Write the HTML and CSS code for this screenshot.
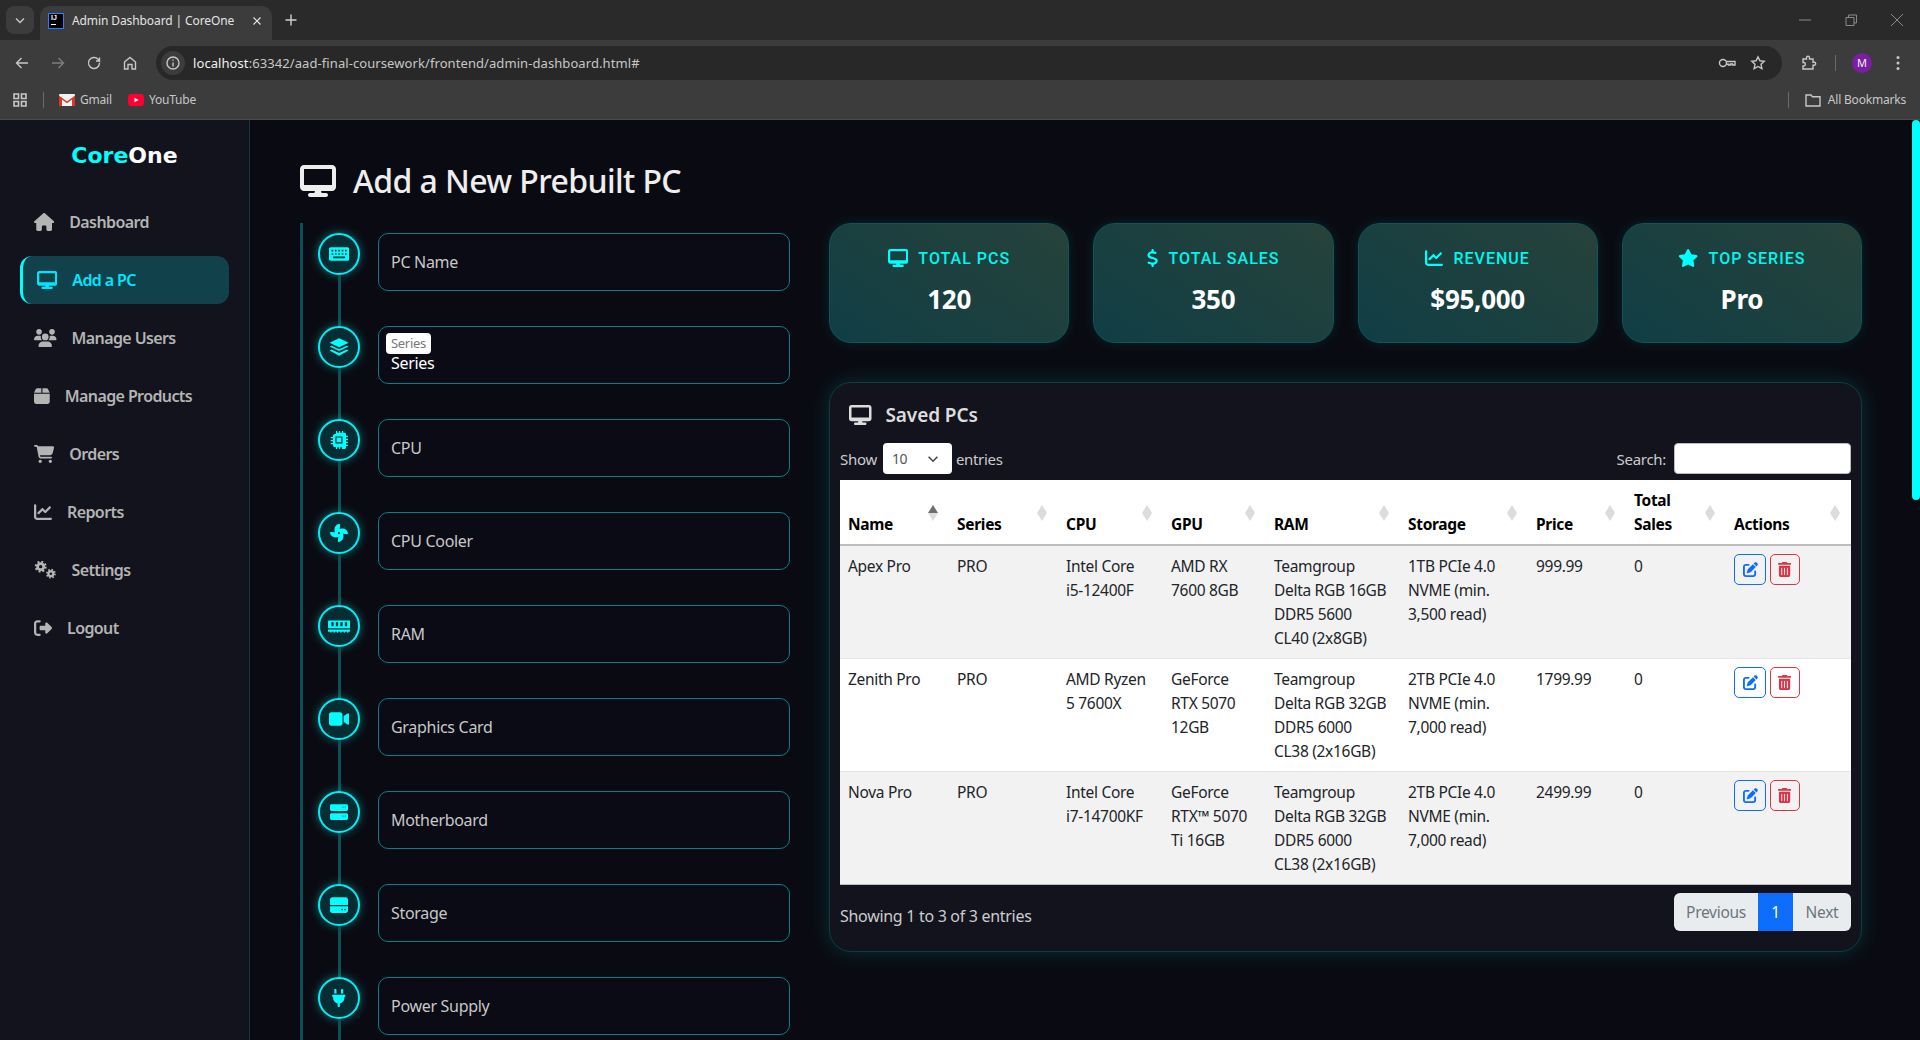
FILE: index.html
```html
<!DOCTYPE html>
<html>
<head>
    <meta charset="UTF-8">
    <title>Admin Dashboard | CoreOne</title>
    <link rel="stylesheet" href="styles.css">
</head>
<body>
<svg class="defs" width="0" height="0">
    <defs>
        <path id="i-desktop" d="M64 0C28.7 0 0 28.7 0 64V352c0 35.3 28.7 64 64 64H240l-10.7 32H160c-17.7 0-32 14.3-32 32s14.3 32 32 32H416c17.7 0 32-14.3 32-32s-14.3-32-32-32H346.7L336 416H512c35.3 0 64-28.7 64-64V64c0-35.3-28.7-64-64-64H64zM512 64V320H64V64H512z"/>
        <path id="i-house" d="M575.8 255.5c0 18-15 32.1-32 32.1h-32l.7 160.2c0 2.7-.2 5.4-.5 8.1V472c0 22.1-17.9 40-40 40H456c-1.1 0-2.2 0-3.3-.1c-1.4 .1-2.8 .1-4.2 .1H416 392c-22.1 0-40-17.9-40-40V448 384c0-17.7-14.3-32-32-32H256c-17.7 0-32 14.3-32 32v64 24c0 22.1-17.9 40-40 40H160 128.1c-1.5 0-3-.1-4.5-.2c-1.2 .1-2.4 .2-3.6 .2H104c-22.1 0-40-17.9-40-40V360c0-.9 0-1.9 .1-2.8V287.6H32c-18 0-32-14-32-32.1c0-9 3-17 10-24L266.4 8c7-7 15-8 22-8s15 2 21 7L564.8 231.5c8 7 12 15 11 24z"/>
        <path id="i-users" d="M144 0a80 80 0 1 1 0 160A80 80 0 1 1 144 0zM512 0a80 80 0 1 1 0 160A80 80 0 1 1 512 0zM0 298.7C0 239.8 47.8 192 106.7 192h42.7c15.9 0 31 3.5 44.6 9.7c-1.3 7.2-1.9 14.7-1.9 22.3c0 38.2 16.8 72.5 43.3 96c-.2 0-.4 0-.7 0H21.3C9.6 320 0 310.4 0 298.7zM405.3 320c-.2 0-.4 0-.7 0c26.6-23.5 43.3-57.8 43.3-96c0-7.6-.7-15-1.9-22.3c13.6-6.3 28.7-9.7 44.6-9.7h42.7C592.2 192 640 239.8 640 298.7c0 11.8-9.6 21.3-21.3 21.3H405.3zM224 224a96 96 0 1 1 192 0 96 96 0 1 1 -192 0zM128 485.3C128 411.7 187.7 352 261.3 352H378.7C452.3 352 512 411.7 512 485.3c0 14.7-11.9 26.7-26.7 26.7H154.7c-14.7 0-26.7-11.9-26.7-26.7z"/>
        <path id="i-box" d="M50.7 58.5L0 160H208V32H93.7C75.5 32 58.9 42.3 50.7 58.5zM240 160H448L397.3 58.5C389.1 42.3 372.5 32 354.3 32H240V160zm208 32H0V416c0 35.3 28.7 64 64 64H384c35.3 0 64-28.7 64-64V192z"/>
        <path id="i-cart" d="M0 24C0 10.7 10.7 0 24 0H69.5c22 0 41.5 12.8 50.6 32h411c26.3 0 45.5 25 38.6 50.4l-41 152.3c-8.5 31.4-37 53.3-69.5 53.3H170.7l5.4 28.5c2.2 11.3 12.1 19.5 23.6 19.5H488c13.3 0 24 10.7 24 24s-10.7 24-24 24H199.7c-34.6 0-64.3-24.6-70.7-58.5L77.4 54.5c-.7-3.8-4-6.5-7.9-6.5H24C10.7 48 0 37.3 0 24zM128 464a48 48 0 1 1 96 0 48 48 0 1 1 -96 0zm336-48a48 48 0 1 1 0 96 48 48 0 1 1 0-96z"/>
        <path id="i-chart" d="M64 64c0-17.7-14.3-32-32-32S0 46.3 0 64V400c0 44.2 35.8 80 80 80H480c17.7 0 32-14.3 32-32s-14.3-32-32-32H80c-8.8 0-16-7.2-16-16V64zm406.6 86.6c12.5-12.5 12.5-32.8 0-45.3s-32.8-12.5-45.3 0L320 210.7l-57.4-57.4c-12.5-12.5-32.8-12.5-45.3 0l-112 112c-12.5 12.5-12.5 32.8 0 45.3s32.8 12.5 45.3 0L240 221.3l57.4 57.4c12.5 12.5 32.8 12.5 45.3 0l128-128z"/>
        <path id="i-logout" d="M377.9 105.9L500.7 228.7c7.2 7.2 11.3 17.1 11.3 27.3s-4.1 20.1-11.3 27.3L377.9 406.1c-6.4 6.4-15 9.9-24 9.9c-18.7 0-33.9-15.2-33.9-33.9l0-62.1-128 0c-17.7 0-32-14.3-32-32l0-64c0-17.7 14.3-32 32-32l128 0 0-62.1c0-18.7 15.2-33.9 33.9-33.9c9 0 17.6 3.6 24 9.9zM160 96L96 96c-17.7 0-32 14.3-32 32l0 256c0 17.7 14.3 32 32 32l64 0c17.7 0 32 14.3 32 32s-14.3 32-32 32l-64 0c-53 0-96-43-96-96L0 128C0 75 43 32 96 32l64 0c17.7 0 32 14.3 32 32s-14.3 32-32 32z"/>
        <g id="i-gears">
            <circle cx="190" cy="160" r="88" fill="none" stroke="currentColor" stroke-width="80"/>
            <circle cx="190" cy="160" r="140" fill="none" stroke="currentColor" stroke-width="60" stroke-dasharray="55 55"/>
            <circle cx="480" cy="360" r="68" fill="none" stroke="currentColor" stroke-width="66"/>
            <circle cx="480" cy="360" r="115" fill="none" stroke="currentColor" stroke-width="50" stroke-dasharray="45 45.3"/>
        </g>
        <path id="i-keyboard" fill-rule="evenodd" d="M48 64H528c27 0 48 21 48 48V400c0 27-21 48-48 48H48c-27 0-48-21-48-48V112C0 85 21 64 48 64zM72 136v48h48V136zM168 136v48h48V136zM264 136v48h48V136zM360 136v48h48V136zM456 136v48h48V136zM72 232v48h48V232zM168 232v48h48V232zM264 232v48h48V232zM360 232v48h48V232zM456 232v48h48V232zM120 328v48H456V328z"/>
        <path id="i-layers" d="M288 10L560 136 288 262 16 136zM70 218l218 100 218-100 54 26L288 370 16 244zM70 330l218 100 218-100 54 26L288 502 16 356z"/>
        <path id="i-chip" fill-rule="evenodd" d="M176 0h32V64h48V0h32V64h48V0h32V64h32c27 0 48 21 48 48v32h64v32H448v48h64v32H448v48h64v32H448v48h64v32H448v32c0 27-21 48-48 48H368v64H336V448H288v64H256V448H208v64H176V448H144c-27 0-48-21-48-48V368H32V336H96V288H32V256H96V208H32V176H96V144c0-27 21-48 48-48h32zM160 160V352H352V160z M192 192H320V320H192z" transform="translate(-16 -16) scale(1.06)"/>
        <path id="i-fan" fill-rule="evenodd" d="M258.6 0c-1.7 0-3.4 .1-5.1 .5C168 17 115.6 102.3 130.5 189.3c2.9 17 8.4 32.9 15.9 47.4L32 224H29.4C13.2 224 0 237.2 0 253.4c0 1.7 .1 3.4 .5 5.1C17 344 102.3 396.4 189.3 381.5c17-2.9 32.9-8.4 47.4-15.9L224 480v2.6c0 16.2 13.2 29.4 29.4 29.4c1.7 0 3.4-.1 5.1-.5C344 495 396.4 409.7 381.5 322.7c-2.9-17-8.4-32.9-15.9-47.4L480 288h2.6c16.2 0 29.4-13.2 29.4-29.4c0-1.7-.1-3.4-.5-5.1C495 168 409.7 115.6 322.7 130.5c-17 2.9-32.9 8.4-47.4 15.9L288 32V29.4C288 13.2 274.8 0 258.6 0zM256 224a32 32 0 1 1 0 64 32 32 0 1 1 0-64z"/>
        <path id="i-memory" fill-rule="evenodd" d="M32 96H608c18 0 32 14 32 32V288c0 18-14 32-32 32H32c-18 0-32-14-32-32V128c0-18 14-32 32-32zM96 152V264h64V152zM224 152V264h64V152zM352 152V264h64V152zM480 152V264h64V152zM0 352H640V416H0zM64 416h32v32H64zM160 416h32v32H160zM256 416h32v32H256zM352 416h32v32H352zM448 416h32v32H448zM544 416h32v32H544z"/>
        <path id="i-video" d="M0 128C0 92.7 28.7 64 64 64H320c35.3 0 64 28.7 64 64V384c0 35.3-28.7 64-64 64H64c-35.3 0-64-28.7-64-64V128zM559.1 99.8c10.4 5.6 16.9 16.4 16.9 28.2V384c0 11.8-6.5 22.6-16.9 28.2s-23 5-32.9-1.6l-96-64L416 337.1V320 192 174.9l14.2-9.5 96-64c9.8-6.5 22.4-7.2 32.9-1.6z"/>
        <path id="i-server" fill-rule="evenodd" d="M40 32H472c22 0 40 18 40 40V184c0 22-18 40-40 40H40c-22 0-40-18-40-40V72C0 50 18 32 40 32zM352 112a16 16 0 1 0 32 0 16 16 0 1 0 -32 0zM416 112a16 16 0 1 0 32 0 16 16 0 1 0 -32 0zM40 288H472c22 0 40 18 40 40V440c0 22-18 40-40 40H40c-22 0-40-18-40-40V328c0-22 18-40 40-40zM352 368a16 16 0 1 0 32 0 16 16 0 1 0 -32 0zM416 368a16 16 0 1 0 32 0 16 16 0 1 0 -32 0z"/>
        <path id="i-hdd" fill-rule="evenodd" d="M64 32H448c35 0 64 29 64 64V256H0V96C0 61 29 32 64 32zM0 288H512V416c0 35-29 64-64 64H64c-35 0-64-29-64-64zM320 384a24 24 0 1 0 48 0 24 24 0 1 0 -48 0zM400 384a24 24 0 1 0 48 0 24 24 0 1 0 -48 0z"/>
        <path id="i-plug" d="M96 0C78.3 0 64 14.3 64 32v96h64V32c0-17.7-14.3-32-32-32zM288 0c-17.7 0-32 14.3-32 32v96h64V32c0-17.7-14.3-32-32-32zM32 160c-17.7 0-32 14.3-32 32s14.3 32 32 32v32c0 77.4 55 142 128 156.8V480c0 17.7 14.3 32 32 32s32-14.3 32-32V412.8C297 398 352 333.4 352 256V224c17.7 0 32-14.3 32-32s-14.3-32-32-32H32z"/>
        <path id="i-dollar" d="M160 0c17.7 0 32 14.3 32 32V67.7c1.6 .2 3.1 .4 4.7 .7c.4 .1 .7 .1 1.1 .2l48 8.8c17.4 3.2 28.9 19.9 25.7 37.2s-19.9 28.9-37.2 25.7l-47.5-8.7c-31.3-4.6-58.9-1.5-78.3 6.2s-27.2 18.3-29 28.1c-2 10.7-.5 16.7 1.2 20.4c1.8 3.9 5.5 8.3 12.8 13.2c16.3 10.7 41.3 17.7 73.7 26.3l2.9 .8c28.6 7.6 63.6 16.8 89.6 33.8c14.2 9.3 27.6 21.9 35.9 39.5c8.5 17.9 10.3 37.9 6.4 59.2c-6.9 38-33.1 63.4-65.6 76.7c-13.7 5.6-28.6 9.2-44.4 11V480c0 17.7-14.3 32-32 32s-32-14.3-32-32V445.1c-.4-.1-.9-.1-1.3-.2l-.2 0 0 0c-24.4-3.8-64.5-14.3-91.5-26.3c-16.1-7.2-23.4-26.1-16.2-42.2s26.1-23.4 42.2-16.2c20.9 9.3 55.3 18.5 75.2 21.6c31.9 4.7 58.2 2 76-5.3c16.9-6.9 24.6-16.9 26.8-28.9c1.9-10.6 .4-16.7-1.3-20.4c-1.9-4-5.6-8.4-13-13.3c-16.4-10.7-41.5-17.7-74-26.3l-2.8-.7 0 0C119.4 279.3 84.4 270 58.4 253c-14.2-9.3-27.5-22-35.8-39.6c-8.4-17.9-10.1-37.9-6.1-59.2C23.7 116 52.3 91.2 84.8 78.3c13.3-5.3 27.9-8.9 43.2-11V32c0-17.7 14.3-32 32-32z"/>
        <path id="i-star" d="M316.9 18C311.6 7 300.4 0 288.1 0s-23.4 7-28.8 18L195 150.3 51.4 171.5c-12 1.8-22 10.2-25.7 21.7s-.7 24.2 7.9 32.7L137.8 329 113.2 474.7c-2 12 3 24.2 12.9 31.3s23 8 33.8 2.3l128.3-68.5 128.3 68.5c10.8 5.7 23.9 4.9 33.8-2.3s14.9-19.3 12.9-31.3L438.5 329 542.7 225.9c8.6-8.5 11.7-21.2 7.9-32.7s-13.7-19.9-25.7-21.7L381.2 150.3 316.9 18z"/>
        <path id="i-edit" d="M471.6 21.7c-21.9-21.9-57.3-21.9-79.2 0L362.3 51.7l97.9 97.9 30.1-30.1c21.9-21.9 21.9-57.3 0-79.2L471.6 21.7zm-299.2 220c-6.1 6.1-10.8 13.6-13.5 21.9l-29.6 88.8c-2.9 8.6-.6 18.1 5.8 24.6s15.9 8.7 24.6 5.8l88.8-29.6c8.2-2.7 15.7-7.4 21.9-13.5L437.7 172.3 339.7 74.3 172.4 241.7zM96 64C43 64 0 107 0 160V416c0 53 43 96 96 96H352c53 0 96-43 96-96V320c0-17.7-14.3-32-32-32s-32 14.3-32 32v96c0 17.7-14.3 32-32 32H96c-17.7 0-32-14.3-32-32V160c0-17.7 14.3-32 32-32h96c17.7 0 32-14.3 32-32s-14.3-32-32-32H96z"/>
        <path id="i-trash" d="M135.2 17.7C140.6 6.8 151.7 0 163.8 0H284.2c12.1 0 23.2 6.8 28.6 17.7L320 32h96c17.7 0 32 14.3 32 32s-14.3 32-32 32H32C14.3 96 0 81.7 0 64S14.3 32 32 32h96l7.2-14.3zM32 128H416V448c0 35.3-28.7 64-64 64H96c-35.3 0-64-28.7-64-64V128zm96 64c-8.8 0-16 7.2-16 16V432c0 8.8 7.2 16 16 16s16-7.2 16-16V208c0-8.8-7.2-16-16-16zm96 0c-8.8 0-16 7.2-16 16V432c0 8.8 7.2 16 16 16s16-7.2 16-16V208c0-8.8-7.2-16-16-16zm96 0c-8.8 0-16 7.2-16 16V432c0 8.8 7.2 16 16 16s16-7.2 16-16V208c0-8.8-7.2-16-16-16z"/>
    </defs>
</svg>

<!-- browser window -->
<div class="tabstrip">
    <button class="tab-search"><svg class="cr" viewBox="0 0 16 16"><path d="M4 6.5l4 4 4-4"/></svg></button>
    <div class="tab">
        <span class="favicon"><b>IJ</b><i></i></span>
        <span class="tab-title">Admin Dashboard | CoreOne</span>
        <svg class="cr tab-close" viewBox="0 0 16 16"><path d="M4 4l8 8M12 4l-8 8"/></svg>
    </div>
    <svg class="cr tab-new" viewBox="0 0 16 16"><path d="M8 2.5v11M2.5 8h11"/></svg>
    <div class="win-btns">
        <svg class="cr" viewBox="0 0 16 16"><path d="M2 8h12"/></svg>
        <svg class="cr" viewBox="0 0 16 16"><path d="M3 5.5h8v8H3zM5.5 5.5V3H13.5V11H11"/></svg>
        <svg class="cr" viewBox="0 0 16 16"><path d="M2 2l12 12M14 2L2 14"/></svg>
    </div>
</div>
<div class="toolbar">
    <svg class="cr tool" viewBox="0 0 16 16"><path d="M14 8H2.500M7.500 3l-5 5 5 5"/></svg>
    <svg class="cr tool dim" viewBox="0 0 16 16"><path d="M2 8h11.500M8.500 3l5 5-5 5"/></svg>
    <svg class="cr tool" viewBox="0 0 16 16"><path d="M13.500 8a5.500 5.500 0 1 1-1.600-3.900L13.500 6V2.500M13.500 6H10"/></svg>
    <svg class="cr tool" viewBox="0 0 16 16"><path d="M2.500 7L8 2.500 13.500 7v7H10V9.500H6V14H2.500z"/></svg>
    <div class="omnibox">
        <span class="site-info"><svg class="cr" viewBox="0 0 16 16"><circle cx="8" cy="8" r="6"/><path d="M8 7.500v4M8 4.500v1.300"/></svg></span>
        <span class="url"><span class="url-host">localhost</span>:63342/aad-final-coursework/frontend/admin-dashboard.html#</span>
        <svg class="cr omni-key" viewBox="0 0 18 16"><circle cx="5" cy="8" r="3.500"/><path d="M8.500 6.500H17V10H14.500V9H12.500V10H10.500V9.300H8.500"/></svg>
        <svg class="cr omni-star" viewBox="0 0 16 16"><path d="M8 1.800l1.900 4 4.300.5-3.200 3 .9 4.400L8 11.500l-3.900 2.200.9-4.400-3.200-3 4.300-.5z"/></svg>
    </div>
    <svg class="cr ext" viewBox="0 0 16 16"><path d="M2 4h3.500V2.800a1.500 1.500 0 0 1 3 0V4H12v3.200h1.200a1.500 1.500 0 0 1 0 3H12V14H2v-3h1a1.800 1.800 0 0 0 0-3.500H2z"/></svg>
    <span class="tool-sep"></span>
    <span class="avatar">M</span>
    <svg class="kebab" viewBox="0 0 4 16"><circle cx="2" cy="2.500" r="1.500"/><circle cx="2" cy="8" r="1.500"/><circle cx="2" cy="13.500" r="1.500"/></svg>
</div>
<div class="bookmarks">
    <svg class="cr apps" viewBox="0 0 16 16"><path d="M2 2h4.500v4.500H2zM9.500 2H14v4.500H9.500zM2 9.500h4.500V14H2zM9.500 9.500H14V14H9.500z"/></svg>
    <span class="bm-sep"></span>
    <span class="bm">
        <svg class="bm-ic" viewBox="0 0 16 12"><rect width="16" height="12" rx="1" fill="#f1f1f1"/><path d="M0 1.500L8 7.500l8-6V12h-3V5.500L8 9.300 3 5.500V12H0z" fill="#d9372c"/></svg>
        Gmail
    </span>
    <span class="bm">
        <svg class="bm-ic" viewBox="0 0 16 12"><rect width="16" height="12" rx="3" fill="#ff0033"/><path d="M6.500 3.800L10.500 6l-4 2.200z" fill="#fff"/></svg>
        YouTube
    </span>
    <span class="bm-sep bm-sep-right"></span>
    <span class="bm bm-all">
        <svg class="cr bm-folder" viewBox="0 0 16 14"><path d="M1 2h5l1.500 1.700H15V13H1z"/></svg>
        All Bookmarks
    </span>
</div>

<div class="page">
    <aside class="sidebar">
        <div class="logo"><span class="logo-core">Core</span>One</div>
        <nav class="nav">
            <a class="nav-item" href="#"><svg class="ic" viewBox="0 0 576 512"><use href="#i-house"/></svg>Dashboard</a>
            <a class="nav-item active" href="#"><svg class="ic" viewBox="0 0 576 512"><use href="#i-desktop"/></svg>Add a PC</a>
            <a class="nav-item" href="#"><svg class="ic" viewBox="0 0 640 512"><use href="#i-users"/></svg>Manage Users</a>
            <a class="nav-item" href="#"><svg class="ic" viewBox="0 0 448 512"><use href="#i-box"/></svg>Manage Products</a>
            <a class="nav-item" href="#"><svg class="ic" viewBox="0 0 576 512"><use href="#i-cart"/></svg>Orders</a>
            <a class="nav-item" href="#"><svg class="ic" viewBox="0 0 512 512"><use href="#i-chart"/></svg>Reports</a>
            <a class="nav-item" href="#"><svg class="ic" viewBox="0 0 640 512"><use href="#i-gears"/></svg>Settings</a>
            <a class="nav-item" href="#"><svg class="ic" viewBox="0 0 512 512"><use href="#i-logout"/></svg>Logout</a>
        </nav>
    </aside>

    <main class="main">
        <h1 class="page-title"><svg class="ic" viewBox="0 0 576 512"><use href="#i-desktop"/></svg>Add a New Prebuilt PC</h1>

        <div class="columns">
            <form class="timeline">
                <div class="step">
                    <span class="step-dot"><svg class="ic" viewBox="0 0 576 512"><use href="#i-keyboard"/></svg></span>
                    <input class="field" type="text" placeholder="PC Name">
                </div>
                <div class="step">
                    <span class="step-dot"><svg class="ic" viewBox="0 0 576 512"><use href="#i-layers"/></svg></span>
                    <div class="field-wrap">
                        <select class="field field-select"><option>Series</option></select>
                        <label class="float-label">Series</label>
                    </div>
                </div>
                <div class="step">
                    <span class="step-dot"><svg class="ic" viewBox="0 0 512 512"><use href="#i-chip"/></svg></span>
                    <input class="field" type="text" placeholder="CPU">
                </div>
                <div class="step">
                    <span class="step-dot"><svg class="ic" viewBox="0 0 512 512"><use href="#i-fan"/></svg></span>
                    <input class="field" type="text" placeholder="CPU Cooler">
                </div>
                <div class="step">
                    <span class="step-dot"><svg class="ic" viewBox="0 0 640 512"><use href="#i-memory"/></svg></span>
                    <input class="field" type="text" placeholder="RAM">
                </div>
                <div class="step">
                    <span class="step-dot"><svg class="ic" viewBox="0 0 576 512"><use href="#i-video"/></svg></span>
                    <input class="field" type="text" placeholder="Graphics Card">
                </div>
                <div class="step">
                    <span class="step-dot"><svg class="ic" viewBox="0 0 512 512"><use href="#i-server"/></svg></span>
                    <input class="field" type="text" placeholder="Motherboard">
                </div>
                <div class="step">
                    <span class="step-dot"><svg class="ic" viewBox="0 0 512 512"><use href="#i-hdd"/></svg></span>
                    <input class="field" type="text" placeholder="Storage">
                </div>
                <div class="step">
                    <span class="step-dot"><svg class="ic" viewBox="0 0 384 512"><use href="#i-plug"/></svg></span>
                    <input class="field" type="text" placeholder="Power Supply">
                </div>
            </form>

            <section class="right">
                <div class="stats">
                    <div class="stat">
                        <div class="stat-label"><svg class="ic" viewBox="0 0 576 512"><use href="#i-desktop"/></svg>TOTAL PCS</div>
                        <div class="stat-value">120</div>
                    </div>
                    <div class="stat">
                        <div class="stat-label"><svg class="ic" viewBox="0 0 320 512"><use href="#i-dollar"/></svg>TOTAL SALES</div>
                        <div class="stat-value">350</div>
                    </div>
                    <div class="stat">
                        <div class="stat-label"><svg class="ic" viewBox="0 0 512 512"><use href="#i-chart"/></svg>REVENUE</div>
                        <div class="stat-value">$95,000</div>
                    </div>
                    <div class="stat">
                        <div class="stat-label"><svg class="ic" viewBox="0 0 576 512"><use href="#i-star"/></svg>TOP SERIES</div>
                        <div class="stat-value">Pro</div>
                    </div>
                </div>

                <div class="panel">
                    <h2 class="panel-title"><svg class="ic" viewBox="0 0 576 512"><use href="#i-desktop"/></svg>Saved PCs</h2>
                    <div class="dt-top">
                        <label class="dt-length">Show
                            <span class="dt-select">10<svg class="cr" viewBox="0 0 16 16"><path d="M3 5.500l5 5 5-5"/></svg></span>
                            entries</label>
                        <label class="dt-search">Search: <input class="dt-input" type="search"></label>
                    </div>
                    <table class="pcs">
                        <colgroup>
                            <col class="c-name"><col class="c-series"><col class="c-cpu"><col class="c-gpu"><col class="c-ram">
                            <col class="c-storage"><col class="c-price"><col class="c-sales"><col class="c-actions">
                        </colgroup>
                        <thead>
                        <tr>
                            <th class="sorted">Name</th>
                            <th>Series</th>
                            <th>CPU</th>
                            <th>GPU</th>
                            <th>RAM</th>
                            <th>Storage</th>
                            <th>Price</th>
                            <th>Total Sales</th>
                            <th>Actions</th>
                        </tr>
                        </thead>
                        <tbody>
                        <tr>
                            <td>Apex Pro</td>
                            <td>PRO</td>
                            <td>Intel Core<br>i5-12400F</td>
                            <td>AMD RX 7600 8GB</td>
                            <td>Teamgroup Delta RGB 16GB DDR5 5600<br>CL40 (2x8GB)</td>
                            <td>1TB PCIe 4.0 NVME (min. 3,500 read)</td>
                            <td>999.99</td>
                            <td>0</td>
                            <td><div class="acts"><button class="btn btn-edit"><svg class="ic" viewBox="0 0 512 512"><use href="#i-edit"/></svg></button><button class="btn btn-del"><svg class="ic" viewBox="0 0 448 512"><use href="#i-trash"/></svg></button></div></td>
                        </tr>
                        <tr>
                            <td>Zenith Pro</td>
                            <td>PRO</td>
                            <td>AMD Ryzen 5 7600X</td>
                            <td>GeForce RTX 5070 12GB</td>
                            <td>Teamgroup Delta RGB 32GB DDR5 6000<br>CL38 (2x16GB)</td>
                            <td>2TB PCIe 4.0 NVME (min. 7,000 read)</td>
                            <td>1799.99</td>
                            <td>0</td>
                            <td><div class="acts"><button class="btn btn-edit"><svg class="ic" viewBox="0 0 512 512"><use href="#i-edit"/></svg></button><button class="btn btn-del"><svg class="ic" viewBox="0 0 448 512"><use href="#i-trash"/></svg></button></div></td>
                        </tr>
                        <tr>
                            <td>Nova Pro</td>
                            <td>PRO</td>
                            <td>Intel Core<br>i7-14700KF</td>
                            <td>GeForce RTX™ 5070 Ti 16GB</td>
                            <td>Teamgroup Delta RGB 32GB DDR5 6000<br>CL38 (2x16GB)</td>
                            <td>2TB PCIe 4.0 NVME (min. 7,000 read)</td>
                            <td>2499.99</td>
                            <td>0</td>
                            <td><div class="acts"><button class="btn btn-edit"><svg class="ic" viewBox="0 0 512 512"><use href="#i-edit"/></svg></button><button class="btn btn-del"><svg class="ic" viewBox="0 0 448 512"><use href="#i-trash"/></svg></button></div></td>
                        </tr>
                        </tbody>
                    </table>
                    <div class="dt-bottom">
                        <div class="dt-info">Showing 1 to 3 of 3 entries</div>
                        <div class="pager">
                            <a class="pg pg-prev" href="#">Previous</a><a class="pg pg-on" href="#">1</a><a class="pg pg-next" href="#">Next</a>
                        </div>
                    </div>
                </div>
            </section>
        </div>
    </main>
    <div class="scroll-thumb"></div>
</div>
</body>
</html>
```

FILE: styles.css
```css
*{
    box-sizing:border-box;
}

html,body{
    margin:0;
    height:100%;
    overflow:hidden;
}

body{
    font-family:"Noto Sans","Open Sans",sans-serif;
    font-size:16px;
    letter-spacing:-0.3px;
    background:#0a0b12;
    color:#ddd;
    display:flex;
    flex-direction:column;
}

.defs{
    position:absolute;
}

.ic{
    height:1em;
    fill:currentColor;
    flex:none;
}

/* browser chrome */
.cr{
    width:16px;
    height:16px;
    fill:none;
    stroke:#c7c7c7;
    stroke-width:1.4;
    flex:none;
}

.tabstrip{
    height:40px;
    flex:none;
    background:#2a2a2a;
    display:flex;
    align-items:flex-end;
    padding-left:6px;
}

.tab-search{
    width:28px;
    height:28px;
    margin-bottom:6px;
    padding:0;
    border:0;
    border-radius:8px;
    background:#3c3c3c;
    display:flex;
    align-items:center;
    justify-content:center;
}

.tab{
    width:232px;
    height:34px;
    margin-left:6px;
    background:#3c3c3c;
    border-radius:10px 10px 0 0;
    display:flex;
    align-items:center;
    padding:0 0 5px 8px;
}

.favicon{
    width:16px;
    height:16px;
    background:#000;
    border:1px solid #2a7fff;
    flex:none;
    color:#fff;
    font:bold 7px/8px "Liberation Sans",sans-serif;
    letter-spacing:0;
    padding-left:2px;
    overflow:hidden;
}

.favicon b{
    display:block;
}

.favicon i{
    display:block;
    width:5px;
    height:1px;
    margin-top:2px;
    background:#fff;
}

.tab-title{
    margin-left:8px;
    width:178px;
    font-size:12px;
    color:#e3e3e3;
    white-space:nowrap;
    letter-spacing:-0.1px;
}

.tab-close{
    width:14px;
    height:14px;
    stroke:#e3e3e3;
}

.tab-new{
    align-self:center;
    margin-left:11px;
    width:16px;
    stroke:#d0d0d0;
}

.win-btns{
    margin-left:auto;
    align-self:center;
    display:flex;
    gap:30px;
    padding-right:15px;
}

.win-btns .cr{
    stroke:#8a8a8a;
    stroke-width:1;
}

.toolbar{
    height:46px;
    flex:none;
    background:#3c3c3c;
    display:flex;
    align-items:flex-start;
    padding-left:14px;
}

.tool{
    margin-top:15px;
    margin-right:20px;
}

.dim{
    stroke:#7d7d7d;
}

.omnibox{
    width:1626px;
    height:34px;
    margin-top:6px;
    margin-left:-2px;
    background:#282828;
    border-radius:17px;
    display:flex;
    align-items:center;
    padding-left:5px;
}

.site-info{
    width:24px;
    height:24px;
    border-radius:50%;
    background:#3c3c3c;
    display:flex;
    align-items:center;
    justify-content:center;
}

.url{
    margin-left:8px;
    font-size:13px;
    color:#c7c7c7;
    letter-spacing:0.08px;
}

.url-host{
    color:#f0f0f0;
}

.omni-key{
    width:18px;
    margin-left:auto;
}

.omni-star{
    margin-left:14px;
    margin-right:16px;
}

.ext{
    margin-top:15px;
    margin-left:19px;
}

.tool-sep{
    width:1px;
    height:16px;
    margin:15px 16px 0 18px;
    background:#6a6a6a;
}

.avatar{
    width:20px;
    height:20px;
    margin-top:13px;
    border-radius:50%;
    background:#7b1fa2;
    color:#eee;
    font-size:11px;
    line-height:20px;
    text-align:center;
    letter-spacing:0;
}

.kebab{
    width:4px;
    height:16px;
    margin:15px 0 0 24px;
    fill:#c7c7c7;
}

.bookmarks{
    height:34px;
    flex:none;
    background:#3c3c3c;
    border-bottom:1px solid #4a4a4a;
    display:flex;
    align-items:center;
    padding:0 0 6px 12px;
    font-size:12px;
    color:#c7c7c7;
}

.bm-sep{
    width:1px;
    height:16px;
    margin:0 15px;
    background:#6a6a6a;
}

.apps{
    stroke-width:1.6;
}

.bm{
    display:flex;
    align-items:center;
    gap:5px;
    margin-right:16px;
    letter-spacing:-0.2px;
}

.bm-ic{
    width:16px;
    height:12px;
}

.bm-sep-right{
    margin-left:auto;
    margin-right:16px;
}

.bm-all{
    margin-right:14px;
    gap:7px;
}

.bm-folder{
    height:14px;
}

/* page */
.page{
    flex:1;
    min-height:0;
    display:flex;
    position:relative;
    overflow:hidden;
}

.sidebar{
    width:250px;
    flex:none;
    background:#12131c;
    border-right:1px solid #0e3a40;
    padding:0 20px;
}

.logo{
    height:78px;
    padding-top:21px;
    text-align:center;
    font-family:"DejaVu Sans",sans-serif;
    font-size:22px;
    font-weight:bold;
    line-height:30px;
    color:#fff;
    letter-spacing:0;
}

.logo-core{
    color:#00ffff;
}

.nav-item{
    display:flex;
    align-items:center;
    height:48px;
    margin-bottom:10px;
    padding-left:14px;
    border-radius:12px;
    color:#b4b4b4;
    text-decoration:none;
    font-weight:600;
    letter-spacing:-0.6px;
}

.nav-item .ic{
    font-size:18px;
    margin-right:15px;
}

.nav-item.active{
    background:#11424b;
    border-left:3px solid #00ffff;
    color:#00e5ff;
}

.main{
    flex:1;
    min-width:0;
    padding:37px 58px 0 50px;
}

.page-title{
    margin:0 0 18px;
    height:48px;
    display:flex;
    align-items:center;
    font-size:32px;
    font-weight:500;
    line-height:48px;
    letter-spacing:-0.6px;
    color:#eee;
    white-space:nowrap;
}

.page-title .ic{
    font-size:32px;
    margin-right:17px;
}

.columns{
    display:grid;
    grid-template-columns:490px 1033px;
    column-gap:39px;
}

/* form timeline */
.timeline{
    border-left:3px solid #0d4f54;
    padding:10px 0 0 15px;
    min-height:900px;
}

.step{
    display:flex;
    gap:18px;
    height:58px;
    margin-bottom:35px;
    position:relative;
}

.step::after{
    content:"";
    position:absolute;
    left:20px;
    top:42px;
    width:3px;
    height:57px;
    background:#0d4f54;
}

.step-dot{
    width:42px;
    height:42px;
    flex:none;
    border:2px solid #00eef7;
    border-radius:50%;
    background:#052d33;
    box-shadow:0 0 10px rgba(0,255,255,.4);
    color:#00ffff;
    font-size:18px;
    display:flex;
    align-items:center;
    justify-content:center;
}

.field{
    display:block;
    width:412px;
    height:58px;
    padding:0 12px;
    border:1px solid #0a7d87;
    border-radius:10px;
    background:#0a0b15;
    color:#fff;
    font:inherit;
    letter-spacing:inherit;
    outline:none;
    appearance:none;
}

.field::placeholder{
    color:#c8c8c8;
    opacity:1;
}

.field-wrap{
    position:relative;
}

.field-select{
    padding-top:16px;
}

.float-label{
    position:absolute;
    left:8px;
    top:7px;
    height:21px;
    padding:0 5px;
    border-radius:4px;
    background:#fff;
    color:#777;
    font-size:13px;
    line-height:21px;
}

/* stat cards */
.stats{
    display:grid;
    grid-template-columns:repeat(4,1fr);
    gap:24px;
    margin-bottom:39px;
}

.stat{
    height:120px;
    border:1px solid #0f555c;
    border-radius:22px;
    background:linear-gradient(35deg,#103e45,#27423a);
    box-shadow:0 0 12px rgba(0,255,255,.1);
    padding-top:22px;
    text-align:center;
}

.stat-label{
    display:flex;
    align-items:center;
    justify-content:center;
    height:24px;
    font-family:"Roboto",sans-serif;
    font-size:16px;
    font-weight:500;
    letter-spacing:1px;
    color:#00f5ec;
}

.stat-label .ic{
    font-size:18px;
    margin-right:10px;
    color:#00ffff;
}

.stat-value{
    margin-top:12px;
    font-size:26px;
    line-height:34px;
    font-weight:bold;
    color:#fff;
}

/* saved table */
.panel{
    height:570px;
    border:1px solid #0c3d45;
    border-radius:22px;
    background:#12131c;
    box-shadow:0 0 20px rgba(0,255,255,.15);
    padding:0 10px;
}

.panel-title{
    margin:0;
    height:60px;
    padding:4px 0 0 9px;
    display:flex;
    align-items:center;
    font-size:19px;
    font-weight:600;
    letter-spacing:-0.1px;
    color:#ddd;
}

.panel-title .ic{
    font-size:20px;
    margin-right:14px;
}

.dt-top{
    display:flex;
    justify-content:space-between;
    align-items:center;
    height:31px;
    margin-bottom:6px;
    font-size:15px;
    color:#ccc;
}

.dt-length,.dt-search{
    display:flex;
    align-items:center;
    gap:4px;
}

.dt-select{
    width:69px;
    height:31px;
    margin-left:2px;
    border-radius:4px;
    background:#fff;
    color:#555;
    font-size:14px;
    padding-left:9px;
    display:flex;
    align-items:center;
    justify-content:space-between;
    padding-right:12px;
}

.dt-select .cr{
    width:14px;
    height:14px;
    stroke:#444;
    stroke-width:1.8;
}

.dt-input{
    width:177px;
    height:31px;
    margin-left:4px;
    border:1px solid #bbb;
    border-radius:4px;
    background:#fff;
}

.pcs{
    width:1011px;
    table-layout:fixed;
    border-collapse:collapse;
    background:#fff;
    color:#212529;
    line-height:24px;
    font-size:15.5px;
}

.c-name,.c-series{width:109px;}
.c-cpu{width:105px;}
.c-gpu{width:103px;}
.c-ram{width:134px;}
.c-storage{width:128px;}
.c-price{width:98px;}
.c-sales{width:100px;}
.c-actions{width:125px;}

.pcs th{
    position:relative;
    height:64px;
    padding:8px 24px 8px 8px;
    text-align:left;
    vertical-align:bottom;
    color:#000;
    font-weight:bold;
    border-bottom:2px solid #bdbdbd;
}

.pcs th::before,.pcs th::after{
    content:"";
    position:absolute;
    right:11px;
    border-left:5px solid transparent;
    border-right:5px solid transparent;
}

.pcs th::before{
    top:25px;
    border-bottom:8px solid #dcdcdc;
}

.pcs th::after{
    top:33px;
    border-top:8px solid #dcdcdc;
}

.pcs th.sorted::before{
    border-bottom-color:#6e6e6e;
}

.pcs td{
    height:113px;
    padding:8px;
    vertical-align:top;
    border-bottom:1px solid #e5e5e5;
}

.pcs tbody tr:nth-child(odd){
    background:#f2f2f2;
}

.pcs tbody tr:last-child td{
    border-bottom:1px solid #bdbdbd;
}

.acts{
    display:flex;
    gap:4px;
}

.btn{
    height:31px;
    padding:0;
    background:transparent;
    border:1px solid;
    border-radius:5px;
    display:flex;
    align-items:center;
    justify-content:center;
    font-size:15px;
}

.btn-edit{
    width:32px;
    color:#0d6efd;
}

.btn-del{
    width:30px;
    color:#dc3545;
}

.dt-bottom{
    display:flex;
    justify-content:space-between;
    margin-top:8px;
    color:#ccc;
}

.dt-info{
    padding-top:12px;
}

.pager{
    display:flex;
    height:38px;
    border-radius:6px;
    overflow:hidden;
    background:#e9ecef;
    font-size:15.5px;
    line-height:38px;
}

.pg{
    color:#6c757d;
    text-decoration:none;
    text-align:center;
}

.pg-prev{
    width:84px;
}

.pg-next{
    width:58px;
}

.pg-on{
    width:35px;
    background:#0d6efd;
    color:#fff;
}

.scroll-thumb{
    position:absolute;
    top:0;
    right:0;
    width:8px;
    height:380px;
    border-radius:4px;
    background:#00ffff;
}
```
